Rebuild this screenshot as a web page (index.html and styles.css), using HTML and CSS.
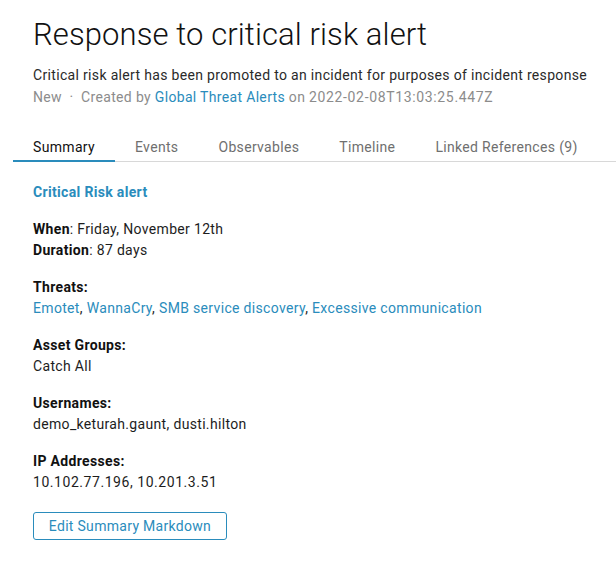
FILE: index.html
```html
<!DOCTYPE html>
<html>
<head>
<meta charset="utf-8">
<link rel="stylesheet" href="styles.css">
</head>
<body>
<div class="page">
  <header class="header">
    <h1 class="title">Response to critical risk alert</h1>
    <p class="desc">Critical risk alert has been promoted to an incident for purposes of incident response</p>
    <p class="meta">New&nbsp;&nbsp;·&nbsp;&nbsp;Created by <a class="link">Global Threat Alerts</a> on <span class="num-wide">2022-02-08T13:03:25.447Z</span></p>
  </header>
  <nav class="tabs">
    <span class="tab active">Summary</span>
    <span class="tab">Events</span>
    <span class="tab">Observables</span>
    <span class="tab">Timeline</span>
    <span class="tab">Linked References (9)</span>
  </nav>
  <section class="content">
    <h2 class="heading">Critical Risk alert</h2>
    <div class="block">
      <div class="line"><b>When</b>: Friday, November 12th</div>
      <div class="line"><b>Duration</b>: 87 days</div>
    </div>
    <div class="block">
      <div class="line"><b>Threats:</b></div>
      <div class="line"><a class="link">Emotet</a>, <a class="link">WannaCry</a>, <a class="link">SMB service discovery</a>, <a class="link">Excessive communication</a></div>
    </div>
    <div class="block">
      <div class="line"><b>Asset Groups:</b></div>
      <div class="line">Catch All</div>
    </div>
    <div class="block">
      <div class="line"><b>Usernames:</b></div>
      <div class="line">demo_keturah.gaunt, dusti.hilton</div>
    </div>
    <div class="block">
      <div class="line"><b>IP Addresses:</b></div>
      <div class="line"><span class="num">10.102.77.196, 10.201.3.51</span></div>
    </div>
    <button class="btn">Edit Summary Markdown</button>
  </section>
</div>
</body>
</html>
```
FILE: styles.css
```css
* { box-sizing: border-box; }
html, body { margin: 0; padding: 0; background: #fff; }
body {
  font-family: Roboto, "Liberation Sans", sans-serif;
  font-size: 14px;
  letter-spacing: 0.33px;
  color: #1d1d1d;
}
.page { width: 616px; }
.header { padding: 14px 0 0 33px; }
.title {
  margin: 0;
  font-size: 31px;
  font-weight: 300;
  line-height: 42px;
  letter-spacing: 0.1px;
  color: #111;
}
.desc {
  margin: 8px 0 0;
  line-height: 22px;
  color: #2a2a2a;
}
.meta {
  margin: 0;
  line-height: 22px;
  color: #8c8c8c;
}
.num-wide { letter-spacing: 0.65px; }
.num { letter-spacing: 0.55px; }
.link { color: #2a8cbc; text-decoration: none; }
.tabs {
  display: flex;
  margin: 27px 0 0 13px;
  border-bottom: 1px solid #d8d8d8;
}
.tab {
  padding: 0 20px;
  line-height: 25px;
  color: #6f6f6f;
  border-bottom: 2px solid transparent;
  margin-bottom: -1px;
}
.tab.active { color: #111; border-bottom-color: #2a8cbc; }
.content { padding: 19px 0 0 33px; }
.heading {
  margin: 0;
  font-size: 14px;
  font-weight: 700;
  line-height: 22px;
  color: #2a8cbc;
}
.block { margin-top: 16px; }
.line { line-height: 21px; }
.line b { font-weight: 700; color: #111; }
.btn {
  margin-top: 19px;
  width: 194px;
  height: 28px;
  background: #fff;
  border: 1px solid #2a8cbc;
  border-radius: 3px;
  color: #2a8cbc;
  font-family: inherit;
  font-size: 14px;
  letter-spacing: 0.3px;
  padding: 0;
}
```
